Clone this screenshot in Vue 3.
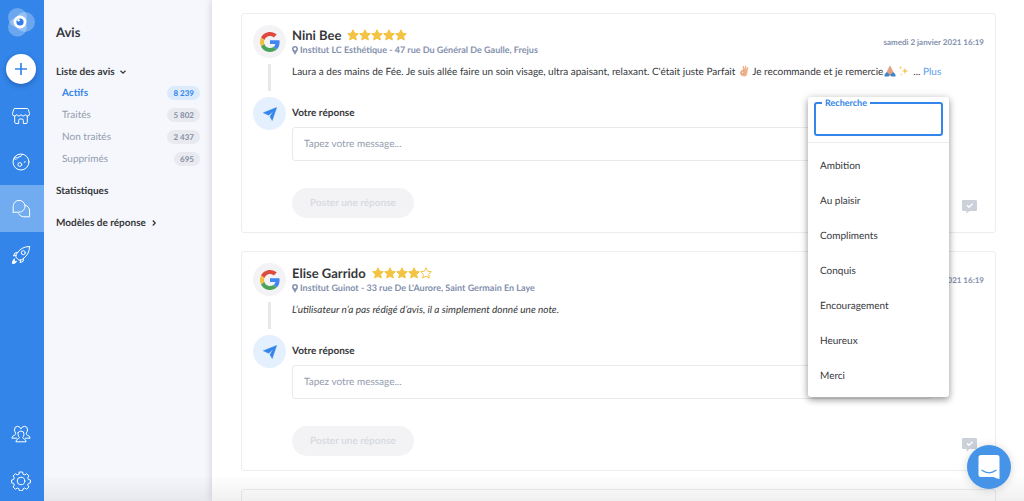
<script setup>
import { ref } from 'vue'

const filters = [
  { label: 'Actifs', count: '8 239', active: true },
  { label: 'Traités', count: '5 802' },
  { label: 'Non traités', count: '2 437' },
  { label: 'Supprimés', count: '695' }
]

const reviews = [
  {
    id: 1,
    author: 'Nini Bee',
    rating: 5,
    place: 'Institut LC Esthétique - 47 rue Du Général De Gaulle, Frejus',
    date: 'samedi 2 janvier 2021 16:19',
    hasText: true
  },
  {
    id: 2,
    author: 'Elise Garrido',
    rating: 4,
    place: "Institut Guinot - 33 rue De L'Aurore, Saint Germain En Laye",
    date: 'samedi 2 janvier 2021 16:19',
    hasText: false
  }
]

const templates = ['Ambition', 'Au plaisir', 'Compliments', 'Conquis', 'Encouragement', 'Heureux', 'Merci']
const search = ref('')
const replies = ref({ 1: '', 2: '' })
</script>

<template>
  <div class="shell">
    <nav class="rail" aria-label="Navigation principale">
      <a href="#" class="logo" aria-label="Accueil">
        <svg width="30" height="30" viewBox="0 0 30 30">
          <circle cx="11.5" cy="10.5" r="9.5" fill="#fff" opacity=".28" />
          <circle cx="19" cy="15" r="10" fill="#fff" opacity=".28" />
          <circle cx="11.5" cy="20" r="9.5" fill="#fff" opacity=".28" />
          <circle cx="14" cy="15" r="6.5" fill="#fff" />
          <circle cx="14" cy="15" r="3.6" fill="#2f7fe6" />
          <circle cx="12.6" cy="13.2" r="1.2" fill="#fff" />
        </svg>
      </a>
      <button class="add" aria-label="Ajouter">
        <svg width="14" height="14" viewBox="0 0 14 14"><path d="M7 1v12M1 7h12" stroke="#3385e9" stroke-width="1.7" /></svg>
      </button>
      <a href="#" class="rail-item" aria-label="Boutique">
        <svg class="line" width="20" height="20" viewBox="0 0 20 20">
          <path d="M3.700 2.500h12.600q.8 0 1 .8l1.200 4.200q.2 2.500-2 2.500-1.800 0-2.200-1.500-.6 1.500-2.200 1.500-1.500 0-2.100-1.500-.6 1.500-2.100 1.500-1.600 0-2.200-1.500-.4 1.500-2.200 1.500-2.200 0-2-2.500l1.200-4.200q.2-.8 1-.8z" />
          <path d="M3.700 10v6.300q0 1.200 1.200 1.200h2.800v-3.300q0-1.200 1.200-1.200h2.200q1.200 0 1.200 1.200v3.300h2.800q1.200 0 1.200-1.200V10" />
        </svg>
      </a>
      <a href="#" class="rail-item" aria-label="Présence">
        <svg class="line" width="20" height="20" viewBox="0 0 20 20">
          <circle cx="10" cy="10" r="8" />
          <path d="M4 4.500q1.200 2.200 3 1.500.3-1.500 1.800-1.300 1.400.2 1.500-1.200.1-1 1.300-1.200M3 6.500l2 .8M14.200 9.300l-.9 1.200" />
          <circle cx="8.800" cy="12.500" r="1.900" />
        </svg>
      </a>
      <a href="#" class="rail-item current" aria-label="Avis" aria-current="page">
        <svg class="line" width="20" height="20" viewBox="0 0 20 20">
          <path d="M2.200 13.200V7.700A5.900 5.900 0 1 1 8 13.200H2.200z" />
          <path d="M14.200 6.300A5.900 5.900 0 0 1 18.600 12V17.800H12.800A5.900 5.900 0 0 1 7.600 14.800" />
        </svg>
      </a>
      <a href="#" class="rail-item" aria-label="Campagnes">
        <svg class="line" width="20" height="20" viewBox="0 0 20 20">
          <path d="M18.500 1.500Q10 1.300 5.200 9.500L4.800 12l3 3.200 2.700-.4Q18.700 10 18.500 1.500z" />
          <circle cx="12.300" cy="7.700" r="2" />
          <path d="M6.500 7.500L3.800 8 2.500 11l2.700-.8M12.500 13.500l-.4 2.800-3 1.400.7-2.900" />
          <path d="M3.200 14q-1.800 1.500-1.800 4.600 3.200 0 4.300-2.100l-2.300.2z" fill="#fff" />
        </svg>
      </a>
      <div class="rail-bottom">
        <a href="#" class="rail-item short" aria-label="Utilisateurs">
          <svg class="line" width="20" height="20" viewBox="0 0 20 20">
            <path d="M7.300 8.300Q6.800 9 7 10.500q.4 2.200 1.300 3-.1 1-1.200 1.300-2 .6-2.200 3h10.200q-.2-2.400-2.200-3-1.100-.3-1.200-1.300 1-.8 1.300-3Q13.300 7 10 7q-2 0-2.700 1.300z" />
            <path d="M9.800 4.500Q9 2.300 6.400 2.300 3.200 2.500 3.500 6q.2 2 1.300 3.200 0 1.600-1.500 2.100Q1 12 .9 14.200h4.600M10.200 4.500q.8-2.200 3.400-2.200 3.200.2 2.900 3.700-.2 2-1.300 3.200 0 1.600 1.500 2.100 2.300.7 2.400 2.900h-4.600" />
          </svg>
        </a>
        <a href="#" class="rail-item short" aria-label="Paramètres">
          <svg class="line" width="20" height="20" viewBox="0 0 20 20">
            <circle cx="10" cy="10" r="3.800" />
            <path d="M8.400 1h3.200l.5 2.200 1.600.7 2-1.200 2.200 2.200-1.200 2 .7 1.600 2 .5v2.900l-2 .5-.7 1.600 1.200 2-2.200 2.200-2-1.200-1.600.7-.5 2.100H8.400l-.5-2.100-1.600-.7-2 1.200-2.200-2.200 1.200-2-.7-1.600-2-.5V9l2-.5.7-1.600-1.200-2 2.200-2.200 2 1.200 1.600-.7z" />
          </svg>
        </a>
      </div>
    </nav>

    <aside class="panel">
      <h1>Avis</h1>
      <button class="group">
        Liste des avis
        <svg width="8" height="8" viewBox="0 0 8 8"><path d="M1.500 2.800L4 5.200l2.500-2.400" /></svg>
      </button>
      <ul class="filters">
        <li v-for="f in filters" :key="f.label">
          <a href="#" :class="{ active: f.active }">
            <span>{{ f.label }}</span>
            <span class="badge">{{ f.count }}</span>
          </a>
        </li>
      </ul>
      <a href="#" class="group stats">Statistiques</a>
      <button class="group">
        Modèles de réponse
        <svg width="8" height="8" viewBox="0 0 8 8"><path d="M2.800 1.500L5.200 4 2.800 6.500" /></svg>
      </button>
    </aside>

    <main>
      <article v-for="r in reviews" :key="r.id" class="card">
        <div class="timeline">
          <span class="disc">
            <svg width="20" height="20" viewBox="0 0 48 48">
              <path fill="#de4b3e" d="M24 9.500c3.540 0 6.710 1.220 9.210 3.600l6.850-6.850C35.900 2.380 30.470 0 24 0 14.620 0 6.510 5.380 2.560 13.220l7.980 6.190C12.430 13.720 17.740 9.500 24 9.500z" />
              <path fill="#4285f4" d="M46.980 24.550c0-1.570-.15-3.090-.38-4.550H24v9.020h12.940c-.58 2.960-2.260 5.480-4.780 7.180l7.730 6c4.510-4.180 7.090-10.360 7.090-17.650z" />
              <path fill="#f2bd42" d="M10.530 28.590c-.48-1.450-.76-2.990-.76-4.590s.27-3.140.76-4.590l-7.980-6.190C.92 16.460 0 20.120 0 24c0 3.880.92 7.540 2.560 10.780l7.970-6.190z" />
              <path fill="#4ba35a" d="M24 48c6.480 0 11.930-2.130 15.890-5.810l-7.730-6c-2.150 1.450-4.920 2.300-8.160 2.300-6.260 0-11.570-4.220-13.470-9.910l-7.980 6.190C6.510 42.620 14.620 48 24 48z" />
            </svg>
          </span>
          <span class="link"></span>
          <span class="disc send">
            <svg width="14" height="14" viewBox="0 0 14 14">
              <path d="M.3 5.800L13.600.5 9.200 13.500 7 9.600 10.300 4 5.700 8.200z" fill="#3385e9" stroke="#3385e9" stroke-width=".5" stroke-linejoin="round" />
            </svg>
          </span>
        </div>
        <div class="body">
          <div class="head">
            <h2>{{ r.author }}</h2>
            <span class="stars" role="img" :aria-label="r.rating + ' sur 5'">
              <svg v-for="n in 5" :key="n" width="12" height="12" viewBox="0 0 12 12">
                <path d="M6 .8l1.600 3.400 3.700.5-2.700 2.600.7 3.700L6 9.200 2.700 11l.7-3.700L.7 4.700l3.700-.5z" :fill="n <= r.rating ? '#f3c443' : 'none'" stroke="#f3c443" stroke-linejoin="round" />
              </svg>
            </span>
          </div>
          <div class="meta">
            <p class="place">
              <svg width="6" height="9" viewBox="0 0 6 9"><path fill-rule="evenodd" d="M3 0a3 3 0 0 1 3 3c0 2-2 3.500-3 6C2 6.500 0 5 0 3a3 3 0 0 1 3-3zM3 1.600a1.400 1.400 0 1 0 0 2.800 1.400 1.400 0 0 0 0-2.800z" fill="#8490ad" /></svg>
              {{ r.place }}
            </p>
            <time>{{ r.date }}</time>
          </div>
          <p v-if="r.hasText" class="text">
            Laura a des mains de Fée. Je suis allée faire un soin visage, ultra apaisant, relaxant. C'était juste Parfait
            <svg class="emoji" width="10" height="12" viewBox="0 0 10 12">
              <path d="M2 10.500Q.2 8 1.500 6.200L4 4.500 3.500 1.300q.8-1 1.300 0L5.500 4 6 .8q.8-.8 1.200.2L7 4.500 8.200 2q1-.3 1 .7L8.300 8q-.5 3.500-3 3.500z" fill="#efb18b" />
              <circle cx="3.600" cy="7.200" r="1.300" fill="#fff3e8" stroke="#cf8058" stroke-width=".7" />
            </svg>
            Je recommande et je remercie<svg class="emoji" width="12" height="12" viewBox="0 0 12 12">
              <path d="M5.700.8L2.800 6.500v2.500l3 1.500zM6.300.8l2.900 5.700v2.500l-3 1.500z" fill="#e9a27d" />
              <path d="M6 1v9.500" stroke="#b96c4c" stroke-width=".6" />
              <path d="M2.800 7L.5 9.500v2h4L6 10zM9.200 7l2.300 2.500v2h-4L6 10z" fill="#3f86c8" />
            </svg>
            <svg class="emoji" width="12" height="12" viewBox="0 0 12 12">
              <path d="M7 2.500l.8 2.700 2.700.8-2.700.8L7 9.500l-.8-2.700L3.500 6l2.700-.8zM2.500 1l.4 1.300 1.300.4-1.300.4-.4 1.300-.4-1.300L.8 2.700l1.300-.4zM3.300 8.200l.3 1 1 .3-1 .3-.3 1-.3-1-1-.3 1-.3z" fill="#f5c451" />
            </svg>
            <span class="more">... <a href="#">Plus</a></span>
          </p>
          <p v-else class="text none">L’utilisateur n’a pas rédigé d’avis, il a simplement donné une note.</p>
          <label class="reply-label" :for="'reply-' + r.id">Votre réponse</label>
          <input :id="'reply-' + r.id" v-model="replies[r.id]" class="reply" type="text" placeholder="Tapez votre message..." />
          <div class="actions">
            <button class="post" disabled>Poster une réponse</button>
            <button class="templates" aria-label="Modèles de réponse">
              <svg width="15" height="14" viewBox="0 0 15 14">
                <path d="M1.300 0h12.400Q15 0 15 1.300v8.400q0 1.300-1.300 1.300H7.500L4.500 13.500V11H1.300Q0 11 0 9.700V1.300Q0 0 1.300 0z" fill="#ccd0da" />
                <path d="M5 5.300l2 2L10.500 3.800" fill="none" stroke="#fff" stroke-width="1.300" />
              </svg>
            </button>
          </div>
        </div>

        <div v-if="r.id === 1" class="menu">
          <fieldset>
            <legend><label for="template-search">Recherche</label></legend>
            <input id="template-search" v-model="search" type="text" />
          </fieldset>
          <ul>
            <li v-for="t in templates" :key="t"><button>{{ t }}</button></li>
          </ul>
        </div>
      </article>
      <article class="card"></article>
    </main>

    <div class="shade"></div>
    <button class="chat" aria-label="Ouvrir la messagerie">
      <svg width="22" height="26" viewBox="0 0 22 26">
        <path d="M3 1h16q2.500 0 2.500 2.500V25q-3.500-.7-6-2H3Q.5 23 .5 20.500v-17Q.5 1 3 1z" fill="#fff" />
        <path d="M4 16.300q7 5 14 0" fill="none" stroke="#4694e8" stroke-width="1.300" stroke-linecap="round" />
      </svg>
    </button>
  </div>
</template>

<style>
body {
  overflow: hidden;
}
</style>

<style scoped>
.shell {
  display: flex;
  height: 100vh;
  overflow: hidden;
  background: #fff;
  color: #36373b;
  font-family: Lato, "Liberation Sans", sans-serif;
  font-size: 10px;
  line-height: 14px;
  text-rendering: geometricPrecision;
}
.shell * {
  box-sizing: border-box;
}
button,
input {
  font: inherit;
  color: inherit;
  text-rendering: inherit;
  border: 0;
  background: none;
  padding: 0;
  margin: 0;
}
a {
  color: inherit;
  text-decoration: none;
}
h1,
h2,
p,
ul {
  margin: 0;
  padding: 0;
  list-style: none;
}
svg {
  flex: none;
}

.rail {
  flex: none;
  width: 44px;
  display: flex;
  flex-direction: column;
  background: #3385e9;
}
.logo {
  display: flex;
  padding: 7px 6px 0;
  height: 54px;
}
.add {
  display: grid;
  place-items: center;
  width: 30px;
  height: 30px;
  margin: 0 6px 9px;
  border-radius: 50%;
  background: #fff;
  box-shadow: 0 2px 5px rgba(10, 50, 120, 0.4);
}
.rail-item {
  display: grid;
  place-items: center;
  width: 42px;
  height: 46px;
}
.rail-item.current {
  width: 44px;
  height: 47px;
  padding-right: 2px;
  background: #71abf0;
}
.rail-bottom {
  display: grid;
  gap: 7px;
  margin-top: auto;
}
.rail-item.short {
  height: 40px;
}
.line {
  fill: none;
  stroke: #fff;
  stroke-width: 1;
  stroke-linejoin: round;
  stroke-linecap: round;
}

.panel {
  flex: none;
  width: 168px;
  padding: 24px 12px;
  background: #f5f7fc;
}
h1 {
  margin-bottom: 25px;
  font-size: 13px;
  line-height: 16px;
}
.group {
  display: flex;
  align-items: center;
  gap: 4px;
  font-weight: 700;
}
.group svg {
  fill: none;
  stroke: #36373b;
  stroke-width: 1.3;
}
.filters {
  margin: 3px 0 14px;
}
.filters a {
  display: flex;
  align-items: center;
  justify-content: space-between;
  height: 22px;
  padding-left: 6px;
  color: #949cae;
}
.badge {
  padding: 0 6px;
  border-radius: 7px;
  background: #e8eaf0;
  color: #8790a5;
  font-size: 8px;
  font-weight: 700;
}
.filters .active {
  color: #3385e9;
  font-weight: 700;
}
.active .badge {
  background: #dcebfc;
  color: #3385e9;
}
.stats {
  margin-bottom: 18px;
}

main {
  flex: 1;
  min-width: 0;
  display: flex;
  flex-direction: column;
  gap: 18px;
  padding: 13px 28px 0 29px;
  background: #fff;
  box-shadow: 0 0 8px rgba(40, 45, 60, 0.2);
}
.card {
  position: relative;
  flex: none;
  display: flex;
  gap: 6px;
  min-height: 40px;
  padding: 11px;
  border: 1px solid #ededf0;
  border-radius: 3px;
}
.timeline {
  display: flex;
  flex-direction: column;
  align-items: center;
  gap: 6px;
}
.disc {
  display: grid;
  place-items: center;
  width: 33px;
  height: 33px;
  border-radius: 50%;
  background: #f3f3f5;
}
.disc.send {
  background: #e4f0fd;
}
.link {
  width: 3px;
  height: 27px;
  background: #e7e8ec;
}
.body {
  flex: 1;
  min-width: 0;
}
.head {
  display: flex;
  align-items: center;
  gap: 6px;
  height: 19px;
}
h2 {
  font-size: 13px;
  line-height: 18px;
}
.stars {
  display: flex;
}
.meta {
  display: flex;
  justify-content: space-between;
  color: #8490ad;
  font-size: 9px;
  font-weight: 700;
  line-height: 12px;
}
.place {
  display: flex;
  align-items: center;
  gap: 2px;
}
time {
  margin-top: -8px;
  font-size: 8px;
}
.text {
  height: 20px;
  margin-top: 9px;
  line-height: 14px;
}
.emoji {
  margin: 0 1px;
  vertical-align: -2px;
}
.more {
  margin-left: 2px;
}
.more a {
  color: #5a9bec;
}
.none {
  font-style: italic;
}
.reply-label {
  display: block;
  margin-top: 21px;
  font-weight: 700;
}
.reply {
  display: block;
  width: calc(100% - 52px);
  height: 34px;
  margin-top: 7px;
  padding: 0 11px;
  border: 1px solid #e9eaee;
  border-radius: 3px;
}
.reply::placeholder {
  color: #949cae;
  opacity: 1;
}
.actions {
  display: flex;
  align-items: flex-start;
  justify-content: space-between;
  margin-top: 27px;
  padding: 0 7px 3px 0;
}
.post {
  width: 122px;
  height: 30px;
  border-radius: 15px;
  background: #f3f3f6;
  color: #d8dbe1;
  font-weight: 700;
}
.templates {
  display: flex;
  margin-top: 12px;
}

.menu {
  position: absolute;
  z-index: 2;
  top: 83px;
  right: 46px;
  width: 141px;
  padding-bottom: 4px;
  border-radius: 3px;
  background: #fff;
  box-shadow: 0 3px 6px rgba(0, 0, 0, 0.3), 0 1px 10px rgba(0, 0, 0, 0.16);
}
fieldset {
  height: 39px;
  margin: 0 6px 6px;
  padding: 0 6px;
  border: 2px solid #3385e9;
  border-radius: 3px;
}
legend {
  padding: 0 3px;
  color: #3385e9;
  font-size: 9px;
  font-weight: 700;
  line-height: 12px;
}
fieldset input {
  display: block;
  width: 100%;
  height: 20px;
  outline: 0;
}
.menu ul {
  padding-top: 5px;
  border-top: 1px solid #ececef;
}
.menu li button {
  width: 100%;
  height: 35px;
  padding: 0 12px;
  text-align: left;
}

.shade {
  position: fixed;
  inset: auto 0 0 44px;
  z-index: 3;
  height: 26px;
  background: linear-gradient(rgba(0, 0, 0, 0), rgba(0, 0, 0, 0.06));
  pointer-events: none;
}
.chat {
  position: fixed;
  z-index: 4;
  right: 13px;
  bottom: 12px;
  display: grid;
  place-items: center;
  width: 44px;
  height: 44px;
  border-radius: 50%;
  background: #4694e8;
  box-shadow: 0 1px 10px rgba(0, 0, 0, 0.16);
}
</style>
